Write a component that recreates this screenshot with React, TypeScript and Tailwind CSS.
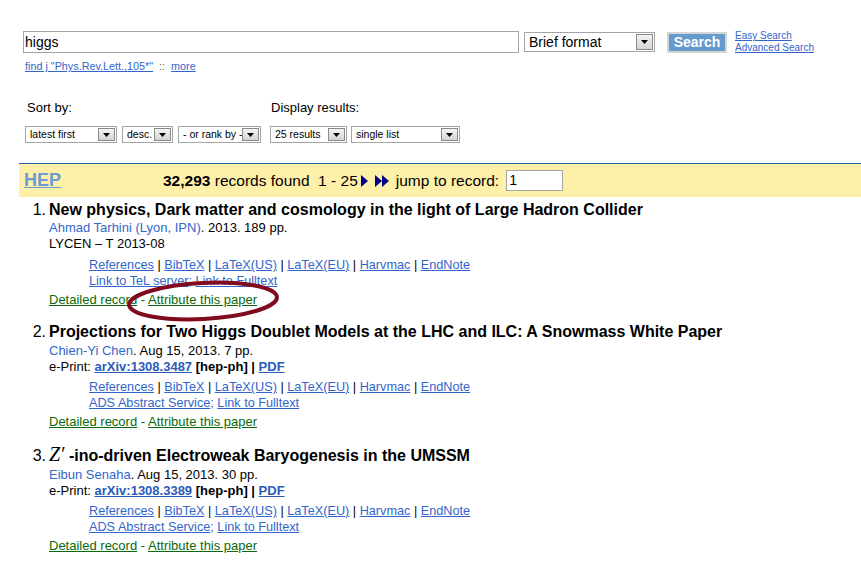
import React from "react";

const DropBtn = () => (
    <div className="w-[17px] h-full border border-[#8a8a8a] bg-gradient-to-b from-[#f4f4f4] to-[#d4d4d4] flex items-center justify-center shrink-0">
        <svg width="7" height="4" viewBox="0 0 7 4"><path d="M0 0h7L3.5 4z" fill="#000" /></svg>
    </div>
);

const FakeSelect = ({ label, w }: { label: string; w: string }) => (
    <div className={`${w} h-[17px] border border-[#a5a5a5] bg-white flex items-stretch p-[1px]`}>
        <span className="flex-1 text-[10.5px] leading-[13px] pl-[3px] text-black whitespace-nowrap overflow-hidden">{label}</span>
        <DropBtn />
    </div>
);

const Sep = () => <span className="text-black"> | </span>;

const ExportLinks = ({ second }: { second: React.ReactNode }) => (
    <div className="pl-[40px] text-[12.7px] leading-[16px] text-[#3366cc]">
        <div>
            <a className="underline">References</a><Sep />
            <a className="underline">BibTeX</a><Sep />
            <a className="underline">LaTeX(US)</a><Sep />
            <a className="underline">LaTeX(EU)</a><Sep />
            <a className="underline">Harvmac</a><Sep />
            <a className="underline">EndNote</a>
        </div>
        <div>{second}</div>
    </div>
);

const Footer = () => (
    <div className="text-[13px] leading-[16px] text-[#0b690b]">
        <a className="underline">Detailed record</a> - <a className="underline">Attribute this paper</a>
    </div>
);

const EPrint = ({ id }: { id: string }) => (
    <div className="text-[13px] leading-[16px]">
        e-Print: <a className="underline font-bold text-[#2a5bb8]">{id}</a> <b>[hep-ph]</b> <b>|</b>{" "}
        <a className="underline font-bold text-[#2a5bb8]">PDF</a>
    </div>
);

const App = () => {
    return (
        <div className="w-[861px] h-[564px] bg-white relative overflow-hidden font-['Liberation_Sans',Arial,sans-serif] text-black">
            {/* search box */}
            <div className="pt-[31px] pl-[23px]">
                <div className="flex items-start">
                    <div className="w-[496px] h-[22px] border border-[#a5a5a5] text-[14px] leading-[20px] pl-[1px]">higgs</div>
                    <div className="ml-[5px] mt-[1px] w-[131px] h-[20px] border border-[#a5a5a5] flex items-stretch p-[1px]">
                        <span className="flex-1 text-[14px] leading-[16px] pl-[3px]">Brief format</span>
                        <DropBtn />
                    </div>
                    <div className="ml-[12px] mt-[1px] w-[60px] h-[21px] border-2 border-[#d6d6d6] bg-[#6699cc] text-white font-bold text-[14px] leading-[17px] text-center">Search</div>
                    <div className="ml-[8px] mt-[-1px] flex flex-col text-[10px] leading-[12px] text-[#3366cc]">
                        <a className="underline">Easy Search</a>
                        <a className="underline">Advanced Search</a>
                    </div>
                </div>
                <div className="mt-[6px] pl-[2px] text-[10.8px] leading-[12px] text-[#3366cc]">
                    <a className="underline">find j "Phys.Rev.Lett.,105*"</a>
                    <span className="text-[#666]">&nbsp; ::&nbsp; </span>
                    <a className="underline">more</a>
                </div>
            </div>

            {/* sort options */}
            <div className="mt-[28px] pl-[25px] flex gap-[9px]">
                <div>
                    <div className="pl-[2px] text-[13px] leading-[16px]">Sort by:</div>
                    <div className="mt-[10px] flex gap-[5px]">
                        <FakeSelect label="latest first" w="w-[92px]" />
                        <FakeSelect label="desc." w="w-[51px]" />
                        <FakeSelect label="- or rank by -" w="w-[83px]" />
                    </div>
                </div>
                <div>
                    <div className="pl-[1px] text-[13px] leading-[16px]">Display results:</div>
                    <div className="mt-[10px] flex gap-[4px]">
                        <FakeSelect label="25 results" w="w-[77px]" />
                        <FakeSelect label="single list" w="w-[109px]" />
                    </div>
                </div>
            </div>

            {/* results header */}
            <div className="mt-[20px] ml-[19px] border-t border-[#2a65a8] bg-[#fef0a9] h-[34px] flex items-center pl-[5px] text-[15.5px]">
                <a className="w-[139px] text-[18px] font-bold underline text-[#6d9bd3]">HEP</a>
                <span className="font-bold">32,293</span>
                <span>&nbsp;records found&nbsp; 1 - 25</span>
                <svg className="ml-[2px]" width="30" height="12" viewBox="0 0 30 12">
                    <path d="M1 0l7 6-7 6z" fill="#000080" />
                    <path d="M15 0l7 6-7 6zM22 0l7 6-7 6z" fill="#000080" />
                </svg>
                <span className="ml-[6px]">jump to record:</span>
                <div className="ml-[7px] w-[57px] h-[21px] border border-[#a5a5a5] bg-white text-[14px] leading-[19px] pl-[2px]">1</div>
            </div>

            {/* records */}
            <div className="pt-[4px] flex flex-col">
                <div className="flex">
                    <div className="w-[49px] text-right pr-[3px] text-[16px] leading-[18px]">1.</div>
                    <div>
                        <div className="text-[16px] leading-[18px] font-bold">New physics, Dark matter and cosmology in the light of Large Hadron Collider</div>
                        <div className="mt-[1px] text-[13px] leading-[16px]">
                            <span className="text-[#3366cc]">Ahmad Tarhini (Lyon, IPN)</span>. 2013. 189 pp.
                        </div>
                        <div className="text-[13px] leading-[16px]">LYCEN – T 2013-08</div>
                        <div className="mt-[5px]">
                            <ExportLinks second={<><a className="underline">Link to TeL server</a>; <a className="underline">Link to Fulltext</a></>} />
                        </div>
                        <div className="mt-[3px]"><Footer /></div>
                    </div>
                </div>

                <div className="flex mt-[15px]">
                    <div className="w-[49px] text-right pr-[3px] text-[16px] leading-[18px]">2.</div>
                    <div>
                        <div className="text-[16px] leading-[18px] font-bold">Projections for Two Higgs Doublet Models at the LHC and ILC: A Snowmass White Paper</div>
                        <div className="mt-[2px] text-[13px] leading-[16px]">
                            <span className="text-[#3366cc]">Chien-Yi Chen</span>. Aug 15, 2013. 7 pp.
                        </div>
                        <EPrint id="arXiv:1308.3487" />
                        <div className="mt-[4px]">
                            <ExportLinks second={<><a className="underline">ADS Abstract Service</a>; <a className="underline">Link to Fulltext</a></>} />
                        </div>
                        <div className="mt-[3px]"><Footer /></div>
                    </div>
                </div>

                <div className="flex mt-[15px]">
                    <div className="w-[49px] text-right pr-[3px] text-[16px] leading-[18px] pt-[2px]">3.</div>
                    <div>
                        <div className="text-[16px] leading-[18px] font-bold">
                            <span className="font-['Liberation_Serif',serif] italic font-normal text-[20px] leading-[18px]">Z′</span> -ino-driven Electroweak Baryogenesis in the UMSSM
                        </div>
                        <div className="mt-[2px] text-[13px] leading-[16px]">
                            <span className="text-[#3366cc]">Eibun Senaha</span>. Aug 15, 2013. 30 pp.
                        </div>
                        <EPrint id="arXiv:1308.3389" />
                        <div className="mt-[4px]">
                            <ExportLinks second={<><a className="underline">ADS Abstract Service</a>; <a className="underline">Link to Fulltext</a></>} />
                        </div>
                        <div className="mt-[3px]"><Footer /></div>
                    </div>
                </div>
            </div>

            {/* annotation ellipse */}
            <svg className="absolute left-[122px] top-[277px] pointer-events-none" width="162" height="48" viewBox="0 0 162 48">
                <ellipse cx="81" cy="24" rx="74" ry="18" fill="none" stroke="#800a1e" strokeWidth="4" transform="rotate(-3 81 24)" />
            </svg>
        </div>
    );
};

export default App;
